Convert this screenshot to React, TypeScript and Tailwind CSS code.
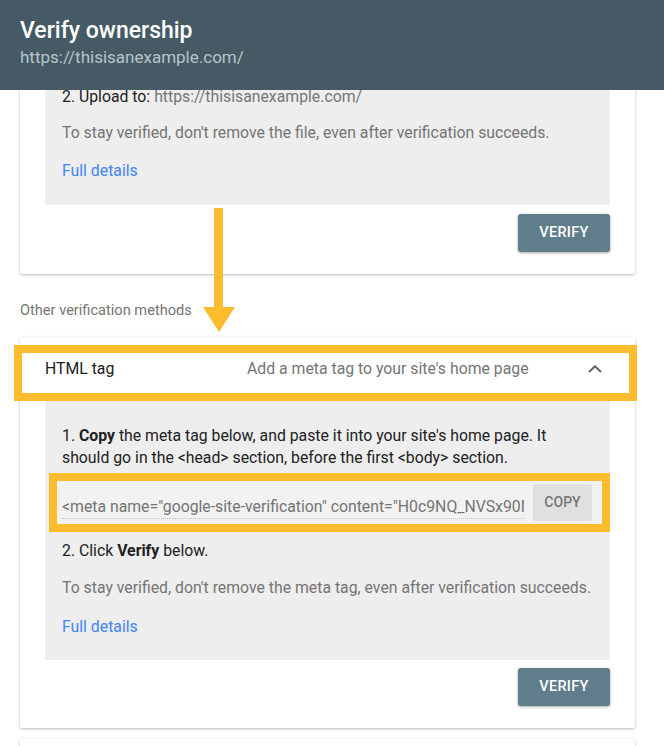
import type { ReactNode } from 'react'

const body = "text-[15.8px] leading-[22px]"

function VerifyButton() {
  return (
    <button className="h-[38px] w-[92px] rounded-[3px] bg-[#607d8b] text-[14.5px] font-medium tracking-[0.3px] text-white shadow-[0_1px_3px_rgba(0,0,0,0.35)]">
      VERIFY
    </button>
  )
}

function Card({ children, className = '' }: { children: ReactNode; className?: string }) {
  return <div className={`relative rounded-[2px] bg-white shadow-[0_1px_3px_rgba(0,0,0,0.28)] ${className}`}>{children}</div>
}

function ChevronUp() {
  return (
    <svg width="14" height="8" viewBox="0 0 14 8" fill="none">
      <path d="M1 7 7 1.3 13 7" stroke="#5f6368" strokeWidth="2" />
    </svg>
  )
}

export default function App() {
  return (
    <div className="relative h-[746px] w-[664px] overflow-hidden bg-white font-['Roboto',sans-serif] text-[#212121]">
      <header className="relative z-10 h-[90px] bg-[#455a64] px-5 pt-[17px]">
        <h1 className="text-[23px] font-medium leading-[28px] text-white">Verify ownership</h1>
        <p className="mt-[1px] text-[17px] leading-[22px] text-[#b9c4ca]">https://thisisanexample.com/</p>
      </header>

      <main className="pl-5 pr-[29px]">
        {/* file upload method, scrolled partly out of view */}
        <Card className="-mt-[29px]">
          <div className="mx-[25px] bg-[#eeeeee] px-[17px] pt-[25px] pb-[23px]">
            <p className={body}>
              2. Upload to: <span className="text-[#757575]">https://thisisanexample.com/</span>
            </p>
            <p className={`${body} mt-[14px] text-[#757575]`}>
              To stay verified, don't remove the file, even after verification succeeds.
            </p>
            <a className={`${body} mt-[16px] block text-[#4285f4]`}>Full details</a>
          </div>
          <div className="flex justify-end pt-[9px] pr-[25px] pb-[22px]">
            <VerifyButton />
          </div>
        </Card>

        <p className="mt-[26px] text-[14.6px] leading-[20px] text-[#757575]">Other verification methods</p>

        <Card className="mt-[17px]">
          <div className="flex h-[64px] items-center pr-[33px] pl-[25px]">
            <span className="w-[202px] text-[15.8px]">HTML tag</span>
            <span className="text-[15.8px] text-[#757575]">Add a meta tag to your site's home page</span>
            <span className="ml-auto">
              <ChevronUp />
            </span>
          </div>
          <div className="pointer-events-none absolute top-[8px] -left-[6px] h-[56px] w-[623px] border-8 border-[#fbbd2e]" />

          <div className="mx-[25px] bg-[#eeeeee] px-[17px] pt-[24px] pb-[22px]">
            <p className={body}>
              1. <b className="font-bold">Copy</b> the meta tag below, and paste it into your site's home page. It should go
              in the &lt;head&gt; section, before the first &lt;body&gt; section.
            </p>
            <div className="mt-[4px] -mr-[17px] -ml-[13px] h-[59px] border-8 border-[#fbbd2e]">
              <div className="flex h-full items-center bg-[#f2f2f2] pr-[10px] pl-[5px]">
                <div className="mr-[9px] flex-1 overflow-hidden border-b border-dotted border-[#bdbdbd] pt-[9px] text-[15.8px] leading-[22px] whitespace-nowrap text-[#757575]">
                  &lt;meta name="google-site-verification" content="H0c9NQ_NVSx90NkYzQ8pL" /&gt;
                </div>
                <button className="h-[37px] w-[59px] shrink-0 rounded-[2px] bg-[#e0e0e0] text-[14px] font-medium text-[#757575]">
                  COPY
                </button>
              </div>
            </div>
            <p className={`${body} mt-[8px]`}>
              2. Click <b className="font-bold">Verify</b> below.
            </p>
            <p className={`${body} mt-[15px] text-[#757575]`}>
              To stay verified, don't remove the meta tag, even after verification succeeds.
            </p>
            <a className={`${body} mt-[17px] block text-[#4285f4]`}>Full details</a>
          </div>
          <div className="flex justify-end pt-[8px] pr-[25px] pb-[22px]">
            <VerifyButton />
          </div>
        </Card>

        <Card className="mt-[11px] h-[40px]">{null}</Card>
      </main>

      {/* arrow pointing down to the other methods */}
      <svg className="absolute top-[208px] left-[202px]" width="34" height="126" viewBox="0 0 34 126">
        <rect x="12" y="0" width="9" height="102" fill="#fbbd2e" />
        <path d="M1 99 H33 L17 124 Z" fill="#fbbd2e" />
      </svg>
    </div>
  )
}
